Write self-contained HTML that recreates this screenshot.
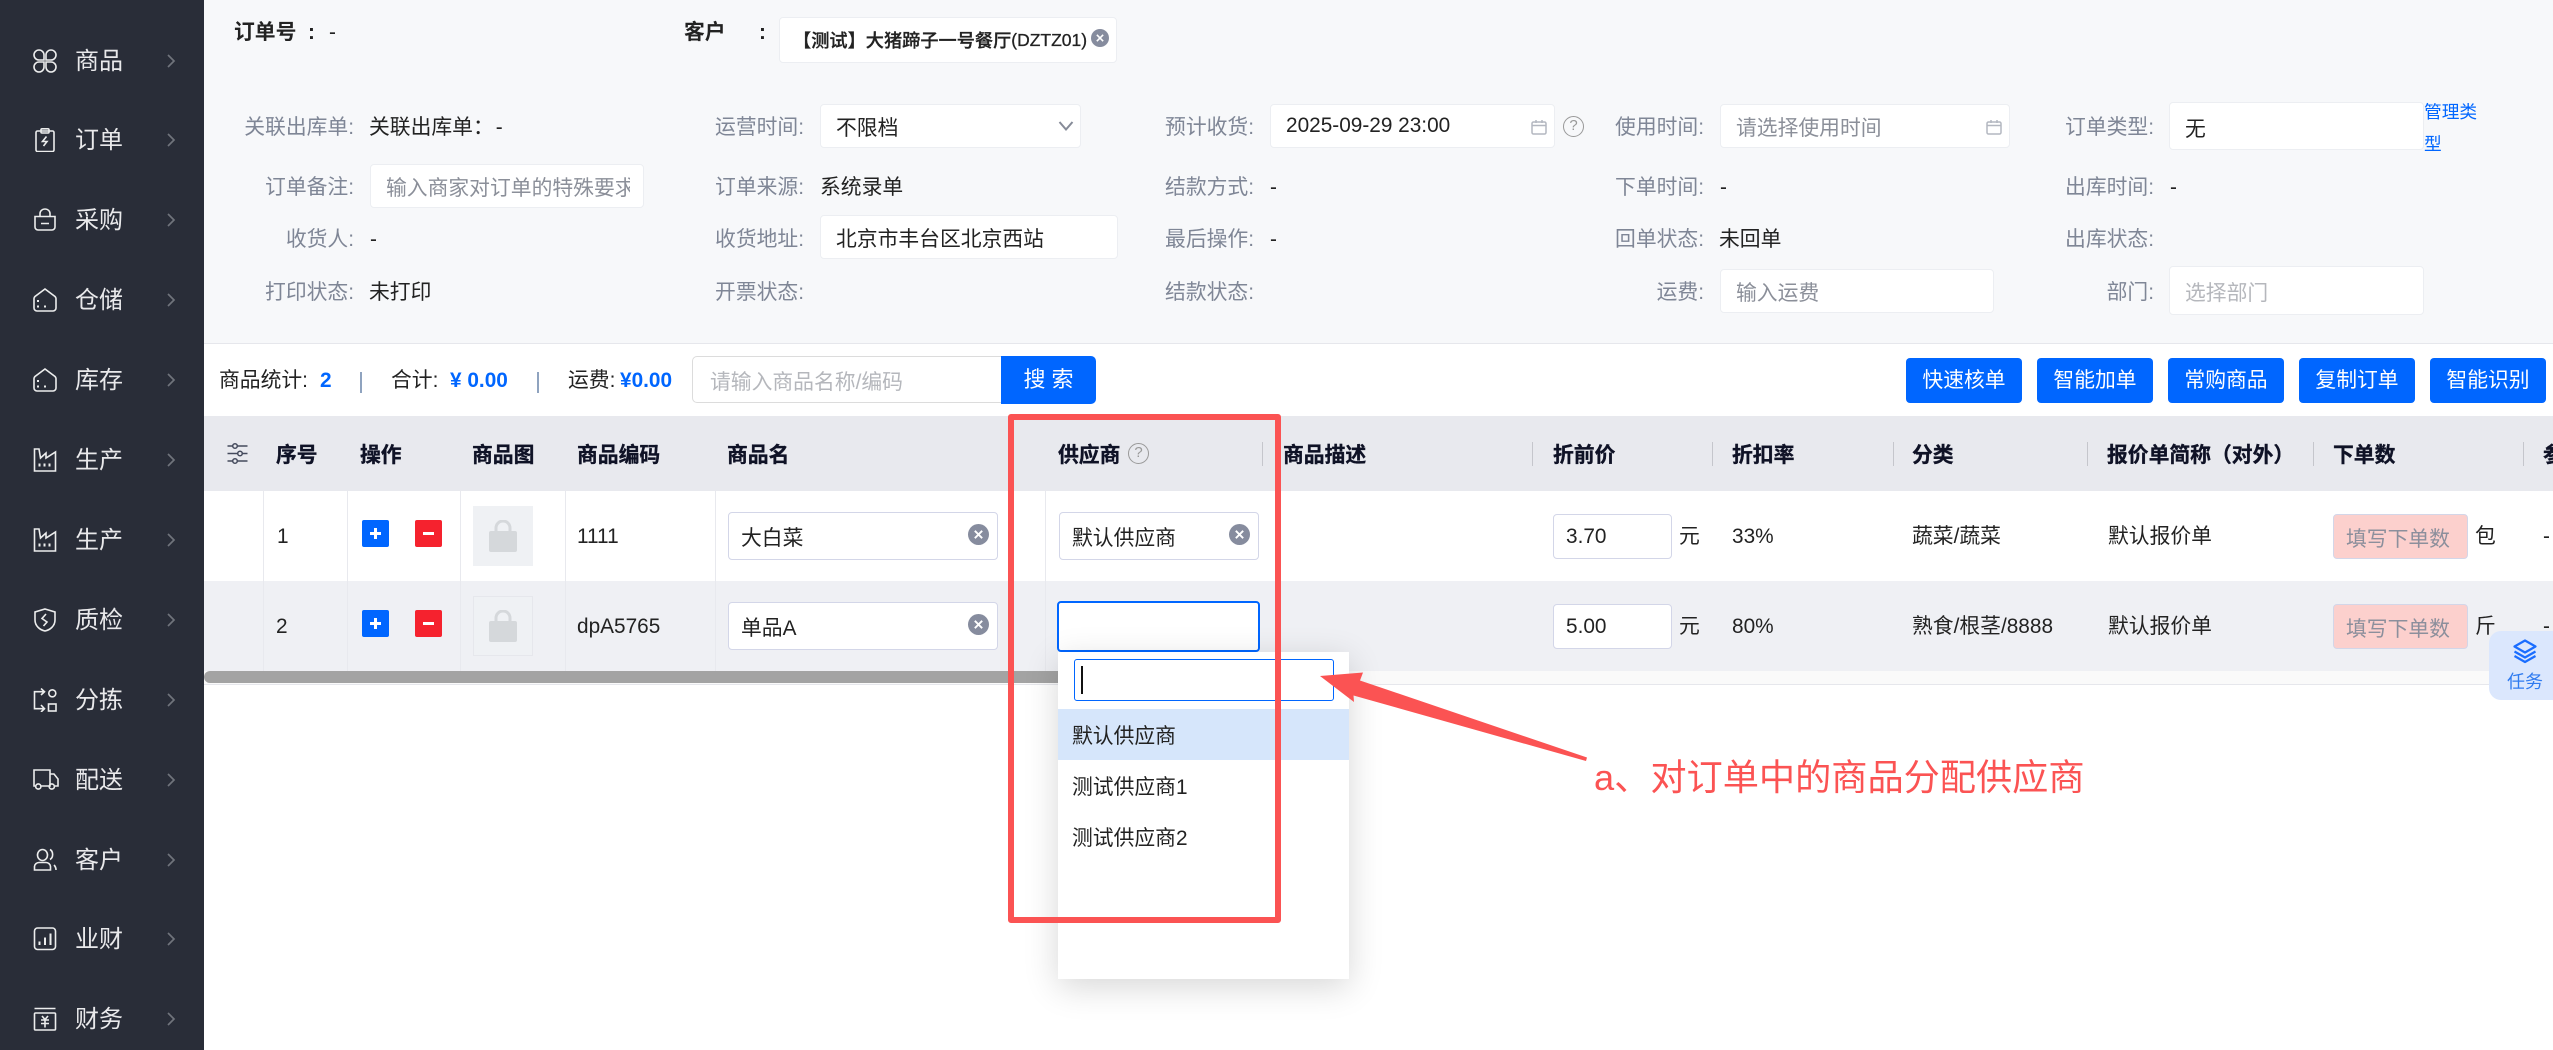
<!DOCTYPE html>
<html lang="zh-CN"><head><meta charset="utf-8"><title>订单</title>
<style>
*{box-sizing:border-box}
html,body{margin:0;padding:0;width:2553px;height:1050px;overflow:hidden;background:#fff}
body{position:relative;font-family:"Liberation Sans","Noto Sans CJK SC",sans-serif;font-size:20.8px;color:#222}
.a,.t,.l,.h,.b,.v{position:absolute}
.t,.l,.h{line-height:30px;height:30px;white-space:nowrap}
.l{color:#7f8696}
.h{font-weight:700;color:#0f1226;top:441px;-webkit-text-stroke:.35px #0f1226}
.b{background:#fff;border:1px solid #eceef2;border-radius:4px;display:flex;align-items:center;padding-left:15px;white-space:nowrap}
.p{color:#8b8f99}
.q{color:#b5b7bc}
.btn{position:absolute;top:358px;height:45px;width:116px;background:#0066ff;color:#fff;border-radius:4px;text-align:center;line-height:45px}
.i{border:1px solid #d3d6e8;padding-left:12px}
.v{background:#e8e9ee}
.s{position:absolute;top:442px;width:1px;height:24px;background:#c5c6cc}
.side{position:absolute;left:0;width:204px;height:40px}
.side span{position:absolute;left:75px;top:1px;line-height:40px;font-size:24px;color:#e9e9eb}
.side svg.ic{position:absolute;left:33px;top:8px;fill:none;stroke:#eceded;stroke-width:1.6}
.side svg.ch{position:absolute;left:166px;top:13px;fill:none;stroke:#70747c;stroke-width:1.7}
.add,.del{position:absolute;width:27px;height:27px;border-radius:2px;color:#fff}
.add{left:362px;background:#0066ff}.del{left:415px;background:#f5222e}
.add:before,.del:before{content:"";position:absolute;left:8px;top:12px;width:11px;height:3px;background:#fff}
.add:after{content:"";position:absolute;left:12px;top:8px;width:3px;height:11px;background:#fff}
.qm{position:absolute;border:1.5px solid #999;border-radius:50%;width:21px;height:21px;font-size:15px;line-height:18px;text-align:center;color:#999}
</style></head><body>
<svg width="0" height="0" style="position:absolute">
<symbol id="clr" viewBox="0 0 20 20"><circle cx="10" cy="10" r="10" fill="#868c9e"/><path d="M6.5 6.5l7 7M13.5 6.5l-7 7" stroke="#fff" stroke-width="1.8"/></symbol>
<symbol id="cal" viewBox="0 0 16 16"><rect x="1" y="3" width="14" height="12" rx="1.5" fill="none" stroke="#b3b7c0" stroke-width="1.5"/><path d="M1 6.5H15M5 1V4M11 1V4" stroke="#b3b7c0" stroke-width="1.5"/></symbol>
<symbol id="bag" viewBox="0 0 28 32"><rect x="0" y="11" width="28" height="21" rx="2" fill="#d5d8db"/><path d="M7 12V8a7 7 0 0 1 14 0v4" fill="none" stroke="#d5d8db" stroke-width="3"/></symbol>
<symbol id="chv" viewBox="0 0 10 14"><path d="M2 1l6 6-6 6"/></symbol>
<symbol id="house" viewBox="0 0 24 24"><path d="M12 1L22 8.500q1 1 1 2V20a3 3 0 0 1-3 3H4a3 3 0 0 1-3-3V10.500q0-1 1-2Z"/><path d="M4 13h2M4 18.500h2M11 18.500h2" stroke-width="2"/></symbol>
<symbol id="fac" viewBox="0 0 24 24"><path d="M1.500 1H6L7.500 10L13 5V10L22.500 4V23H1.500Z"/><path d="M6.500 15.500v3M11.500 15.500v3M16.500 15.500v3" stroke-width="2"/></symbol>
</svg>

<!-- sidebar -->
<div class="a" style="left:0;top:0;width:204px;height:1050px;background:#292d38"></div>
<div class="side" style="top:41px"><svg class="ic" width="24" height="24" viewBox="0 0 24 24"><path d="M11 11H6A5 5 0 1 1 11 6ZM13 11H18A5 5 0 1 0 13 6ZM11 13H6A5 5 0 1 0 11 18ZM13 13H18A5 5 0 1 1 13 18Z"/></svg><span>商品</span><svg class="ch" width="10" height="14"><use href="#chv"/></svg></div>
<div class="side" style="top:120px"><svg class="ic" width="24" height="24" viewBox="0 0 24 24"><rect x="3" y="3" width="18" height="20.500" rx="1.500"/><rect x="8" y="0.800" width="8" height="4.200" rx="1"/><path d="M13.500 8.500L9.500 13.500H14L10.500 18"/></svg><span>订单</span><svg class="ch" width="10" height="14"><use href="#chv"/></svg></div>
<div class="side" style="top:200px"><svg class="ic" width="24" height="24" viewBox="0 0 24 24"><path d="M2 8.500H22V19a3 3 0 0 1-3 3H5a3 3 0 0 1-3-3ZM7 8.500V5.500a5 4.500 0 0 1 10 0V8.500M8 15.500H16"/></svg><span>采购</span><svg class="ch" width="10" height="14"><use href="#chv"/></svg></div>
<div class="side" style="top:280px"><svg class="ic" width="24" height="24"><use href="#house"/></svg><span>仓储</span><svg class="ch" width="10" height="14"><use href="#chv"/></svg></div>
<div class="side" style="top:360px"><svg class="ic" width="24" height="24"><use href="#house"/></svg><span>库存</span><svg class="ch" width="10" height="14"><use href="#chv"/></svg></div>
<div class="side" style="top:440px"><svg class="ic" width="24" height="24"><use href="#fac"/></svg><span>生产</span><svg class="ch" width="10" height="14"><use href="#chv"/></svg></div>
<div class="side" style="top:520px"><svg class="ic" width="24" height="24"><use href="#fac"/></svg><span>生产</span><svg class="ch" width="10" height="14"><use href="#chv"/></svg></div>
<div class="side" style="top:600px"><svg class="ic" width="24" height="24" viewBox="0 0 24 24"><path d="M12 1L22 4V12C22 18 17 22 12 23C7 22 2 18 2 12V4ZM13 6L9 10.500L14 14L10.500 18"/></svg><span>质检</span><svg class="ch" width="10" height="14"><use href="#chv"/></svg></div>
<div class="side" style="top:680px"><svg class="ic" width="24" height="24" viewBox="0 0 24 24"><path d="M11 3.700H1.500V20.700H11M8 0.500L11.500 3.700L8 7M8 17L11.500 20.700L8 24"/><circle cx="19.300" cy="5.300" r="3.500"/><rect x="15.500" y="16" width="7.500" height="7"/></svg><span>分拣</span><svg class="ch" width="10" height="14"><use href="#chv"/></svg></div>
<div class="side" style="top:760px"><svg class="ic" width="26" height="24" viewBox="0 0 26 24"><path d="M2.500 18H1V2H17V18H8M17 6H21L25 11V18H22M12 18H15"/><circle cx="5.300" cy="18.500" r="2.600"/><circle cx="18.800" cy="18.500" r="2.600"/></svg><span>配送</span><svg class="ch" width="10" height="14"><use href="#chv"/></svg></div>
<div class="side" style="top:840px"><svg class="ic" width="24" height="24" viewBox="0 0 24 24"><ellipse cx="9.500" cy="7" rx="5" ry="5.500"/><path d="M1.500 22V18.500a4.500 4.500 0 0 1 4.500-4H13a4.500 4.500 0 0 1 4.500 4V22ZM17 1.500C20.500 3.500 20.500 9.500 17 11.500M21 17C22.500 18.500 23 20 23 22"/></svg><span>客户</span><svg class="ch" width="10" height="14"><use href="#chv"/></svg></div>
<div class="side" style="top:919px"><svg class="ic" width="24" height="24" viewBox="0 0 24 24"><rect x="1.500" y="1" width="21" height="21.500" rx="3"/><path d="M6.500 18V14.500M12 18V10.500M17.500 18V6.500" stroke-width="2"/></svg><span>业财</span><svg class="ch" width="10" height="14"><use href="#chv"/></svg></div>
<div class="side" style="top:999px"><svg class="ic" width="24" height="24" viewBox="0 0 24 24"><path d="M1.500 1.500H22.500"/><rect x="1.500" y="6" width="21" height="17" rx="1"/><path d="M9 9L12 12.500L15 9M8 13H16M8 16.500H16M12 12.500V20.500"/></svg><span>财务</span><svg class="ch" width="10" height="14"><use href="#chv"/></svg></div>

<!-- top form background -->
<div class="a" style="left:204px;top:0;width:2349px;height:344px;background:#f7f8fa;border-bottom:1px solid #e6e7ec"></div>

<div class="t" style="left:234px;top:18px;font-weight:700;color:#222">订单号</div>
<div class="t" style="left:308px;top:18px;font-weight:700">:</div>
<div class="t" style="left:329px;top:18px">-</div>
<div class="t" style="left:684px;top:18px;font-weight:700;color:#222">客户</div>
<div class="t" style="left:759px;top:18px;font-weight:700">:</div>
<div class="b" style="left:779px;top:17px;width:338px;height:46px;padding-left:13px;font-size:18.200px;font-weight:500;color:#222;-webkit-text-stroke:.3px #222">【测试】大猪蹄子一号餐厅<span style="font-size:17.500px">(DZTZ01)</span></div>
<svg class="a" style="left:1091px;top:29px" width="18" height="18"><use href="#clr"/></svg>

<!-- row 1 -->
<div class="l" style="right:2199px;top:113px">关联出库单:</div>
<div class="t" style="left:369px;top:113px">关联出库单：<span style="margin-left:2px">-</span></div>
<div class="l" style="right:1749px;top:113px">运营时间:</div>
<div class="b" style="left:820px;top:104px;width:261px;height:44px;padding-left:15px">不限档</div>
<svg class="a" style="left:1058px;top:120px" width="16" height="12"><path d="M1.500 2L8 9.500L14.500 2" fill="none" stroke="#868b98" stroke-width="2"/></svg>
<div class="l" style="right:1299px;top:113px">预计收货:</div>
<div class="b" style="left:1270px;top:104px;width:285px;height:44px">2025-09-29 23:00</div>
<svg class="a" style="left:1531px;top:119px" width="16" height="16"><use href="#cal"/></svg>
<div class="qm" style="left:1563px;top:116px">?</div>
<div class="l" style="right:849px;top:113px">使用时间:</div>
<div class="b p" style="left:1720px;top:104px;width:290px;height:44px">请选择使用时间</div>
<svg class="a" style="left:1986px;top:119px" width="16" height="16"><use href="#cal"/></svg>
<div class="l" style="right:399px;top:113px">订单类型:</div>
<div class="b" style="left:2169px;top:102px;width:255px;height:48px;padding-top:2px">无</div>
<div class="a" style="left:2424px;top:96px;width:64px;font-size:17.700px;line-height:32px;color:#0066ff">管理类型</div>

<!-- row 2 -->
<div class="l" style="right:2199px;top:173px">订单备注:</div>
<div class="b p" style="left:370px;top:164px;width:274px;height:44px"><span style="display:block;width:244px;overflow:hidden">输入商家对订单的特殊要求</span></div>
<div class="l" style="right:1749px;top:173px">订单来源:</div>
<div class="t" style="left:820px;top:173px">系统录单</div>
<div class="l" style="right:1299px;top:173px">结款方式:</div>
<div class="t" style="left:1270px;top:173px">-</div>
<div class="l" style="right:849px;top:173px">下单时间:</div>
<div class="t" style="left:1720px;top:173px">-</div>
<div class="l" style="right:399px;top:173px">出库时间:</div>
<div class="t" style="left:2170px;top:173px">-</div>

<!-- row 3 -->
<div class="l" style="right:2199px;top:225px">收货人:</div>
<div class="t" style="left:370px;top:225px">-</div>
<div class="l" style="right:1749px;top:225px">收货地址:</div>
<div class="b" style="left:820px;top:215px;width:298px;height:44px">北京市丰台区北京西站</div>
<div class="l" style="right:1299px;top:225px">最后操作:</div>
<div class="t" style="left:1270px;top:225px">-</div>
<div class="l" style="right:849px;top:225px">回单状态:</div>
<div class="t" style="left:1719px;top:225px">未回单</div>
<div class="l" style="right:399px;top:225px">出库状态:</div>

<!-- row 4 -->
<div class="l" style="right:2199px;top:278px">打印状态:</div>
<div class="t" style="left:369px;top:278px">未打印</div>
<div class="l" style="right:1749px;top:278px">开票状态:</div>
<div class="l" style="right:1299px;top:278px">结款状态:</div>
<div class="l" style="right:849px;top:278px">运费:</div>
<div class="b p" style="left:1720px;top:269px;width:274px;height:44px">输入运费</div>
<div class="l" style="right:399px;top:278px">部门:</div>
<div class="b q" style="left:2169px;top:266px;width:255px;height:49px">选择部门</div>

<!-- toolbar -->
<div class="t" style="left:219px;top:366px">商品统计:</div>
<div class="t" style="left:320px;top:366px;font-weight:700;color:#0066ff">2</div>
<div class="a" style="left:360px;top:372px;width:2px;height:21px;background:#8fa3bf"></div>
<div class="t" style="left:391px;top:366px">合计:</div>
<div class="t" style="left:450px;top:366px;font-weight:700;color:#0066ff">¥ 0.00</div>
<div class="a" style="left:537px;top:372px;width:2px;height:21px;background:#8fa3bf"></div>
<div class="t" style="left:568px;top:366px">运费:</div>
<div class="t" style="left:620px;top:366px;font-weight:700;color:#0066ff">¥0.00</div>
<div class="b q" style="left:692px;top:356px;width:312px;height:47px;border:1.500px solid #dcdcdc;padding-left:17px;border-radius:5px 0 0 5px">请输入商品名称/编码</div>
<div class="a" style="left:1001px;top:356px;width:95px;height:48px;background:#0066ff;color:#fff;font-size:22px;line-height:48px;text-align:center;border-radius:0 5px 5px 0">搜 索</div>
<div class="btn" style="left:1906px">快速核单</div>
<div class="btn" style="left:2037px">智能加单</div>
<div class="btn" style="left:2168px">常购商品</div>
<div class="btn" style="left:2299px">复制订单</div>
<div class="btn" style="left:2430px">智能识别</div>

<!-- table -->
<div class="a" style="left:204px;top:416px;width:2349px;height:75px;background:#e8e9ee"></div>
<div class="a" style="left:204px;top:581px;width:2349px;height:90px;background:#eff0f4"></div>
<div class="a" style="left:204px;top:671px;width:2349px;height:14px;background:#fafafa;border-bottom:1px solid #e6e7ec"></div>
<div class="a" style="left:204px;top:671px;width:900px;height:12px;background:#a3a3a3;border-radius:6px"></div>

<div class="v" style="left:263px;top:416px;width:1px;height:255px"></div>
<div class="v" style="left:347px;top:416px;width:1px;height:255px"></div>
<div class="v" style="left:460px;top:416px;width:1px;height:255px"></div>
<div class="v" style="left:565px;top:416px;width:1px;height:255px"></div>
<div class="v" style="left:715px;top:416px;width:1px;height:255px"></div>
<div class="v" style="left:1045px;top:416px;width:1px;height:255px"></div>
<div class="s" style="left:1262px"></div>
<div class="s" style="left:1532px"></div>
<div class="s" style="left:1712px"></div>
<div class="s" style="left:1893px"></div>
<div class="s" style="left:2087px"></div>
<div class="s" style="left:2313px"></div>
<div class="s" style="left:2523px"></div>

<svg class="a" style="left:227px;top:442px" width="21" height="23" viewBox="0 0 21 23"><g fill="none" stroke="#444a5c" stroke-width="1.500"><path d="M0.500 4H6M10.500 4H20.500M0.500 11.500H11M15.500 11.500H20.500M0.500 19H6M10.500 19H20.500"/><circle cx="8" cy="4" r="2.300"/><circle cx="13" cy="11.500" r="2.300"/><circle cx="8" cy="19" r="2.300"/></g></svg>
<div class="h" style="left:276px">序号</div>
<div class="h" style="left:360px">操作</div>
<div class="h" style="left:472px">商品图</div>
<div class="h" style="left:577px">商品编码</div>
<div class="h" style="left:727px">商品名</div>
<div class="h" style="left:1058px">供应商</div>
<div class="qm" style="left:1128px;top:443px">?</div>
<div class="h" style="left:1283px">商品描述</div>
<div class="h" style="left:1553px">折前价</div>
<div class="h" style="left:1732px">折扣率</div>
<div class="h" style="left:1912px">分类</div>
<div class="h" style="left:2107px">报价单简称（对外）</div>
<div class="h" style="left:2333px">下单数</div>
<div class="h" style="left:2543px">参</div>

<!-- row A -->
<div class="t" style="left:277px;top:522px">1</div>
<div class="add" style="top:520px"></div><div class="del" style="top:520px"></div>
<div class="a" style="left:473px;top:506px;width:60px;height:60px;background:#eff1f4"></div>
<svg class="a" style="left:489px;top:520px" width="28" height="32"><use href="#bag"/></svg>
<div class="t" style="left:577px;top:522px">1111</div>
<div class="b i" style="left:728px;top:512px;width:270px;height:48px">大白菜</div>
<svg class="a" style="left:968px;top:524px" width="21" height="21"><use href="#clr"/></svg>
<div class="b i" style="left:1059px;top:512px;width:200px;height:48px">默认供应商</div>
<svg class="a" style="left:1229px;top:524px" width="21" height="21"><use href="#clr"/></svg>
<div class="b i" style="left:1553px;top:514px;width:119px;height:45px">3.70</div>
<div class="t" style="left:1679px;top:522px">元</div>
<div class="t" style="left:1732px;top:522px">33%</div>
<div class="t" style="left:1912px;top:522px">蔬菜/蔬菜</div>
<div class="t" style="left:2108px;top:522px">默认报价单</div>
<div class="b i" style="left:2333px;top:514px;width:135px;height:45px;background:#fcd0cd;color:#8c8f9c">填写下单数</div>
<div class="t" style="left:2475px;top:522px">包</div>
<div class="t" style="left:2543px;top:522px">-</div>

<!-- row B -->
<div class="t" style="left:276px;top:612px">2</div>
<div class="add" style="top:610px"></div><div class="del" style="top:610px"></div>
<div class="a" style="left:473px;top:596px;width:60px;height:60px;background:#eff1f4;border:1px solid #e6e7ec"></div>
<svg class="a" style="left:489px;top:610px" width="28" height="32"><use href="#bag"/></svg>
<div class="t" style="left:577px;top:612px">dpA5765</div>
<div class="b i" style="left:728px;top:602px;width:270px;height:48px">单品A</div>
<svg class="a" style="left:968px;top:614px" width="21" height="21"><use href="#clr"/></svg>
<div class="a" style="left:1057px;top:601px;width:203px;height:51px;background:#fff;border:2px solid #0066ff;border-radius:4px"></div>
<div class="b i" style="left:1553px;top:604px;width:119px;height:45px">5.00</div>
<div class="t" style="left:1679px;top:612px">元</div>
<div class="t" style="left:1732px;top:612px">80%</div>
<div class="t" style="left:1912px;top:612px">熟食/根茎/8888</div>
<div class="t" style="left:2108px;top:612px">默认报价单</div>
<div class="b i" style="left:2333px;top:604px;width:135px;height:45px;background:#fcd0cd;color:#8c8f9c">填写下单数</div>
<div class="t" style="left:2475px;top:612px">斤</div>
<div class="t" style="left:2543px;top:612px">-</div>

<!-- dropdown -->
<div class="a" style="left:1058px;top:652px;width:291px;height:327px;background:#fff;box-shadow:0 8px 32px rgba(0,0,0,.16)"></div>
<div class="a" style="left:1074px;top:659px;width:260px;height:42px;border:1.500px solid #0066ff;border-radius:3px;background:#fff"></div>
<div class="a" style="left:1081px;top:666px;width:2px;height:28px;background:#111"></div>
<div class="a" style="left:1058px;top:709px;width:291px;height:51px;background:#d6e6fb"></div>
<div class="t" style="left:1072px;top:722px">默认供应商</div>
<div class="t" style="left:1072px;top:773px">测试供应商1</div>
<div class="t" style="left:1072px;top:824px">测试供应商2</div>

<!-- task -->
<div class="a" style="left:2489px;top:631px;width:64px;height:69px;background:#dbe7fd;border-radius:12px 0 0 12px"></div>
<svg class="a" style="left:2513px;top:639px" width="24" height="25" viewBox="0 0 24 25"><path d="M12 1.500L22.500 7.500L12 13.500L1.500 7.500ZM1.500 12.500L12 18.500L22.500 12.500M1.500 17L12 23L22.500 17" fill="none" stroke="#1a6dff" stroke-width="2.200" stroke-linejoin="round"/></svg>
<div class="t" style="left:2507px;top:667px;font-size:18px;color:#2f7bf0">任务</div>

<!-- annotations -->
<div class="a" style="left:1008px;top:414px;width:273px;height:509px;border:6px solid #fb5353;border-radius:3px"></div>
<svg class="a" style="left:0;top:0" width="2553" height="1050"><polygon points="1320,676 1363,672.500 1360,680.500 1587,757.500 1586,761 1353.500,695.500 1354,702" fill="#fb5353"/></svg>
<div class="a" style="left:1594px;top:753px;font-size:36.200px;line-height:50px;color:#fb5353;white-space:nowrap">a、对订单中的商品分配供应商</div>
</body></html>
